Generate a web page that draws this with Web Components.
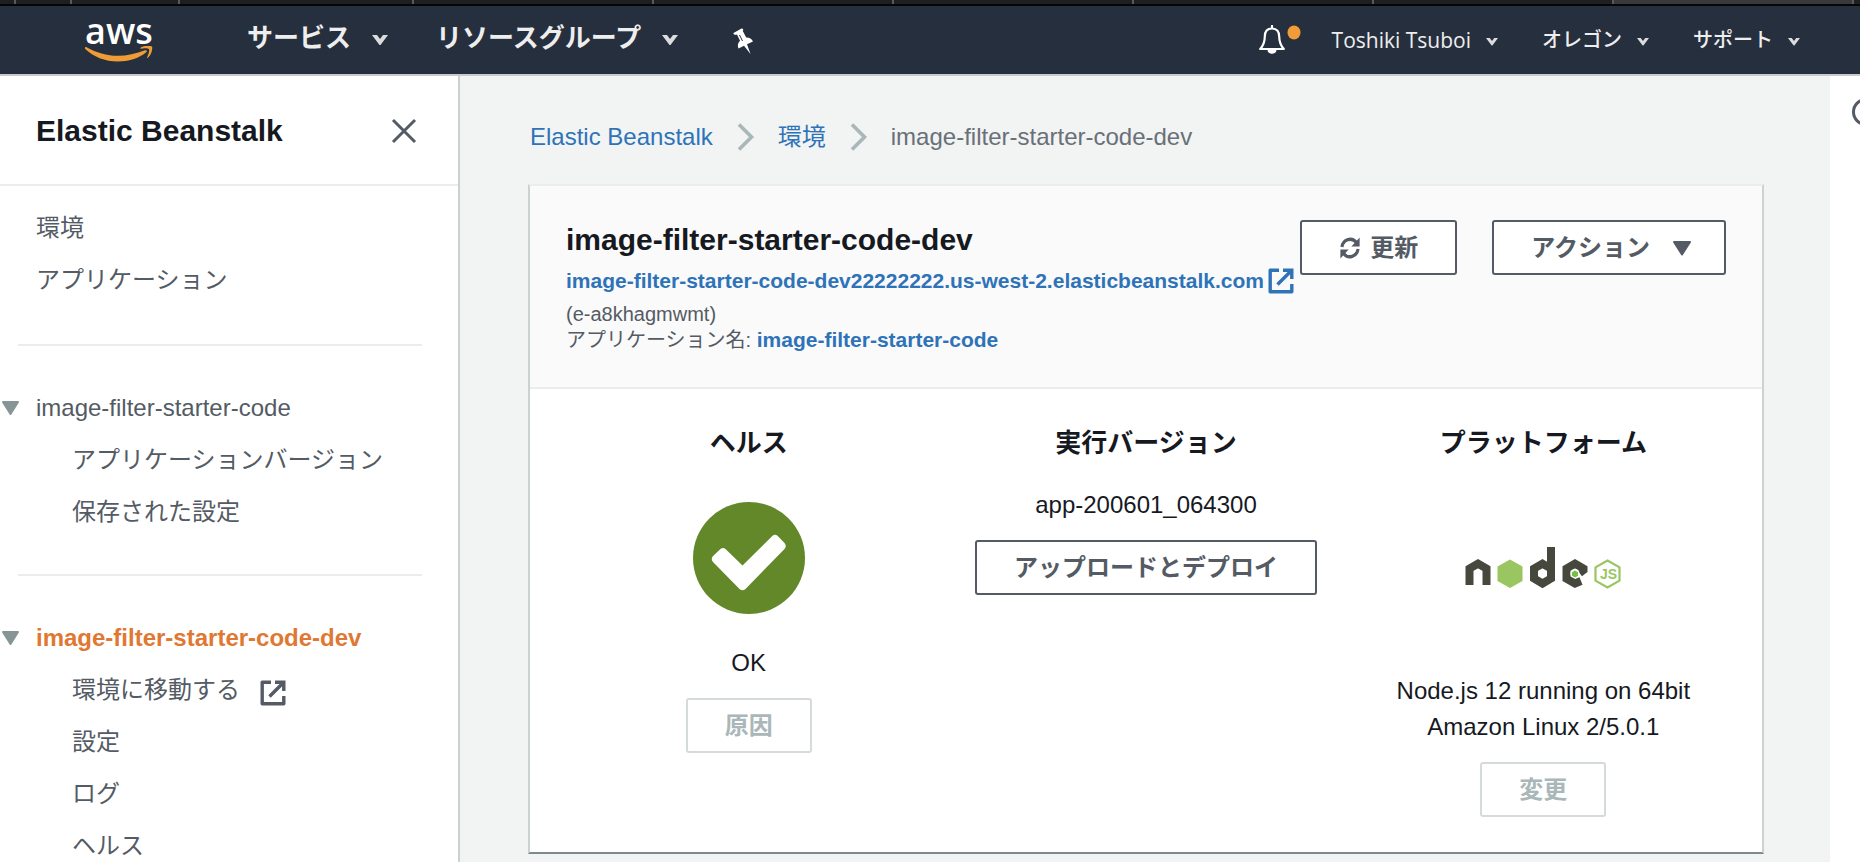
<!DOCTYPE html>
<html lang="ja">
<head>
<meta charset="utf-8">
<title>Elastic Beanstalk</title>
<style>
  html, body { height: 100%; }
  body {
    margin: 0;
    overflow: hidden;
    background: #f2f3f3;
    font-family: "Liberation Sans", "Noto Sans CJK JP", sans-serif;
    font-size: 24px;
    line-height: 36px;
    color: #16191f;
    --link: #2e73b8;
    --grey: #545b64;
    --line: #eaeded;
  }
</style>
</head>
<body>
<eb-console></eb-console>

<template id="t-console">
  <style>
    :host { display: flex; flex-direction: column; height: 100vh; }
    .row { display: flex; flex: 1; min-height: 0; }
    main { flex: 1; min-width: 0; padding: 43px 66px 0 68px; }
    eb-card { margin-top: 29px; }
  </style>
  <browser-tabs></browser-tabs>
  <eb-topbar></eb-topbar>
  <div class="row">
    <eb-sidebar></eb-sidebar>
    <main>
      <eb-breadcrumbs></eb-breadcrumbs>
      <eb-card></eb-card>
    </main>
    <eb-help></eb-help>
  </div>
</template>

<template id="t-tabs">
  <style>
    :host { display: flex; height: 4px; background: #1e201f; border-bottom: 2px solid #050606; }
    span { border-right: 2px solid #58595a; flex-basis: 0; }
    .on { background: #39393b; }
  </style>
  <span style="flex-grow:14"></span><span style="flex-grow:54"></span><span style="flex-grow:106"></span>
  <span style="flex-grow:232"></span><span style="flex-grow:238"></span><span style="flex-grow:238"></span>
  <span style="flex-grow:238"></span><span style="flex-grow:238"></span><span style="flex-grow:238"></span>
  <span class="on" style="flex-grow:238"></span><div style="flex:6 1 0"></div>
</template>

<template id="t-topbar">
  <style>
    :host { display: block; background: #262f3e; border-bottom: 2px solid #c8cacb; }
    header { display: flex; align-items: center; height: 68px; padding: 0 60px 0 84px; }
    .logo { display: flex; flex-direction: column; align-items: center; width: 70px; text-decoration: none; color: #fff;
      font: 600 36px/24px "Open Sans", sans-serif; margin-right: 93px; }
    .logo svg { margin-top: 3px; }
    nav { display: flex; align-items: center; }
    .primary { gap: 48px; padding-bottom: 4px; }
    .primary eb-menu { font-size: 26px; font-weight: 700; --gap: 21px; --caret: 16px; }
    .tools { margin-left: auto; gap: 44px; }
    .tools eb-menu { font-size: 20px; font-weight: 500; --gap: 15px; --caret: 12px; }
    .tools .user { font-family: "Open Sans", sans-serif; font-size: 21px; }
    button { all: unset; display: flex; }
    .pin { margin: 6px 0 0 6px; }
    .bell { margin-right: -14px; }
  </style>
  <header>
    <a class="logo" href="#">aws
      <svg width="70" height="16" viewBox="0 0 70 16"><path fill="#ef9b36" d="M1 1.5c.4-.8 1.2-.6 2-.1 9 5 20 8.400 31 8.400 9 0 18-2 27-5.500 1.500-.6 2.600.9 1.200 2C55 12.500 44 15.500 34 15.500 21 15.500 9 10.500 1.500 3.200 1 2.600.8 2 1 1.500zM65 3.200c-1.200-1.500-6-.9-8-.5-.8.1-.9-.6-.2-1.100 4-2.600 10.500-1.800 11.200-1 .8 1-.2 8-4 11.200-.6.5-1.200.2-.9-.4.900-2.100 2.800-6.800 1.900-8.200z"/></svg>
    </a>
    <nav class="primary">
      <eb-menu>サービス</eb-menu>
      <eb-menu>リソースグループ</eb-menu>
      <button class="pin" aria-label="ピン"><svg width="22" height="26" viewBox="0 0 22 26"><path fill="#fff" d="M1.500 5 9.500.6c1.500-.4 2.300 1.200 1.300 2.400l3.400 6.500c2.900-.2 5.600 1.300 6.800 4l-6 2.700L18.500 26l-6.500-8.300-5.500 2.800C5.200 17.800 5.800 14.600 8 12.700L5 6.600C3.200 7.200.9 6.500 1.500 5z"/><path d="m7.500 7 3 6" stroke="#262f3e" stroke-width="1"/></svg></button>
    </nav>
    <nav class="tools">
      <button class="bell" aria-label="通知"><svg width="44" height="30" viewBox="0 0 44 30"><path d="M14 3.500c-5 0-7.200 3.500-7.200 8 0 6-1.500 9-4.600 12.500h23.600c-3.100-3.500-4.600-6.500-4.600-12.500 0-4.500-2.200-8-7.200-8zM14 3.500V1" fill="none" stroke="#fff" stroke-width="2.200" stroke-linejoin="round" stroke-linecap="round"/><path d="M9.500 25h9c0 5-9 5-9 0z" fill="#fff"/><ellipse cx="36" cy="7.500" rx="6.500" ry="7" fill="#f29c38"/></svg></button>
      <eb-menu class="user">Toshiki Tsuboi</eb-menu>
      <eb-menu>オレゴン</eb-menu>
      <eb-menu>サポート</eb-menu>
    </nav>
  </header>
</template>

<template id="t-menu">
  <style>
    :host { display: block; color: #eee; }
    button { all: unset; display: flex; align-items: center; gap: var(--gap); white-space: nowrap; cursor: pointer; }
    svg { width: var(--caret); margin-top: 4px; }
  </style>
  <button><slot></slot><svg viewBox="0 0 16 10"><path fill="#dcdcdc" d="M0 0h5l3 4 3-4h5L8.500 10h-1z"/></svg></button>
</template>

<template id="t-sidebar">
  <style>
    :host { display: block; width: 458px; flex: none; background: #fff; border-right: 2px solid #ccd0d0; overflow: hidden; }
    header { display: flex; align-items: center; justify-content: space-between; height: 106px; padding: 2px 41px 0 36px; border-bottom: 2px solid var(--line); }
    h2 { margin: 0; font-size: 30px; }
    button { all: unset; display: flex; }
    hr { margin: 36px 36px 36px 18px; border: 0; border-top: 2px solid var(--line); }
    ul { list-style: none; margin: 0; padding: 0; }
    .first { padding: 16px 0 2px; }
  </style>
  <header>
    <h2>Elastic Beanstalk</h2>
    <button aria-label="閉じる"><svg width="26" height="26" viewBox="0 0 26 26"><path d="m2 2 22 22M24 2 2 24" stroke="#545b64" stroke-width="3"/></svg></button>
  </header>
  <nav>
    <ul class="first"><li><eb-link>環境</eb-link></li><li><eb-link>アプリケーション</eb-link></li></ul>
    <hr>
    <ul>
      <li><eb-link open>image-filter-starter-code</eb-link></li>
      <li><eb-link sub>アプリケーションバージョン</eb-link></li>
      <li><eb-link sub>保存された設定</eb-link></li>
    </ul>
    <hr>
    <ul>
      <li><eb-link open current>image-filter-starter-code-dev</eb-link></li>
      <li><eb-link sub>環境に移動する<eb-external slot="icon"></eb-external></eb-link></li>
      <li><eb-link sub>設定</eb-link></li>
      <li><eb-link sub>ログ</eb-link></li>
      <li><eb-link sub>ヘルス</eb-link></li>
    </ul>
  </nav>
</template>

<template id="t-link">
  <style>
    :host { display: flex; align-items: center; height: 52px; color: var(--grey); }
    .mark { width: 36px; display: flex; flex: none; }
    .mark svg { visibility: hidden; margin-left: 1px; }
    :host([open]) .mark svg { visibility: visible; }
    :host([sub]) .mark { width: 72px; }
    :host([current]) { color: #df7832; font-weight: 700; }
    a { display: flex; align-items: center; gap: 20px; color: inherit; text-decoration: none; white-space: nowrap; }
    ::slotted(eb-external) { margin-top: 6px; }
  </style>
  <span class="mark"><svg width="19" height="16" viewBox="0 0 19 16"><path d="M2 2h15L9.500 14z" fill="#879596" stroke="#879596" stroke-width="2" stroke-linejoin="round"/></svg></span>
  <a href="#"><slot></slot><slot name="icon"></slot></a>
</template>

<template id="t-external">
  <style>:host { display: block; width: 26px; height: 26px; } svg { display: block; }</style>
  <svg width="26" height="26" viewBox="0 0 26 26" fill="none" stroke="currentColor" stroke-width="3.400"><path d="M11 2.200H2.200v21.600h21.600V16" stroke-linejoin="round"/><path d="M15 2.200h8.800V11M23 3 9.500 16.500"/></svg>
</template>

<template id="t-breadcrumbs">
  <style>
    :host { display: block; }
    ol { display: flex; align-items: center; margin: 0; padding: 0 0 0 2px; gap: 23px; list-style: none; color: #687078; }
    li { display: flex; align-items: center; gap: 24px; }
    a { color: var(--link); text-decoration: none; }
  </style>
  <ol>
    <li><a href="#">Elastic Beanstalk</a><svg width="18" height="28" viewBox="0 0 18 28"><path d="m2 1.500 12.500 12.500L2 26.500" fill="none" stroke="#aab7b8" stroke-width="3.600"/></svg></li>
    <li><a href="#">環境</a><svg width="18" height="28" viewBox="0 0 18 28"><path d="m2 1.500 12.500 12.500L2 26.500" fill="none" stroke="#aab7b8" stroke-width="3.600"/></svg></li>
    <li>image-filter-starter-code-dev</li>
  </ol>
</template>

<template id="t-card">
  <style>
    :host { display: block; background: #fff; border: 2px solid #ccd2d2; border-top-color: var(--line); border-bottom-color: #7f8a8c; }
    header { display: flex; align-items: flex-start; background: #fafafa; border-bottom: 2px solid var(--line); padding: 34px 36px; }
    .info { flex: 1; min-width: 0; font-size: 20px; line-height: 26px; color: var(--grey); white-space: nowrap; }
    h1 { margin: 2px 0 10px; font-size: 30px; line-height: 36px; color: #16191f; }
    a { color: var(--link); font-size: 21px; font-weight: 700; text-decoration: none; }
    .url { display: flex; align-items: center; gap: 4px; margin-bottom: 7px; }
    .actions { display: flex; gap: 35px; }
    .stats { display: grid; grid-template-columns: repeat(3, 1fr); padding: 36px 20px 35px; text-align: center; }
    section { display: flex; flex-direction: column; align-items: center; }
    h3 { margin: 0; font-size: 26px; line-height: 36px; }
    p { margin: 0 0 17px; }
    .check { margin: 41px 0 31px; }
    .version { margin-top: 26px; }
    .node { margin: 83px 0; }
  </style>
  <header>
    <div class="info">
      <h1>image-filter-starter-code-dev</h1>
      <div class="url"><a href="#">image-filter-starter-code-dev22222222.us-west-2.elasticbeanstalk.com</a><a href="#" aria-label="新しいタブで開く"><eb-external></eb-external></a></div>
      <div>(e-a8khagmwmt)</div>
      <div>アプリケーション名: <a href="#">image-filter-starter-code</a></div>
    </div>
    <div class="actions">
      <eb-button><svg slot="before" width="22" height="24" viewBox="0 0 24 24" preserveAspectRatio="none" fill="none" stroke="currentColor" stroke-width="3.400"><path d="M3.200 11A9 9 0 0 1 19 6.500M20.800 13A9 9 0 0 1 5 17.500"/><path d="M22.500 1.500v9h-9zM1.500 22.500v-9h9z" fill="currentColor" stroke="none"/></svg>更新</eb-button>
      <eb-button wide>アクション<svg slot="after" width="20" height="16" viewBox="0 0 20 16"><path d="M2 2h16l-8 12.500z" fill="currentColor" stroke="currentColor" stroke-width="2" stroke-linejoin="round"/></svg></eb-button>
    </div>
  </header>
  <div class="stats">
    <section>
      <h3>ヘルス</h3>
      <svg class="check" width="112" height="112" viewBox="0 0 112 112"><circle cx="56" cy="56" r="56" fill="#62882a"/><path d="M27.500 47q2.500-2 5 0L49.500 63.500 79.500 33.800q2.500-2 5 0l7 7.200q2.500 3 0 6L52.500 87q-3 2.500-6 0L20 60q-2.500-3 0-6z" fill="#fff"/></svg>
      <p>OK</p>
      <eb-button disabled>原因</eb-button>
    </section>
    <section>
      <h3>実行バージョン</h3>
      <p class="version">app-200601_064300</p>
      <eb-button>アップロードとデプロイ</eb-button>
    </section>
    <section>
      <h3>プラットフォーム</h3>
      <svg class="node" width="156" height="46" viewBox="0 0 156 46" role="img" aria-label="node js">
        <g fill="none" stroke="#46483e" stroke-width="8">
          <path d="M4.500 41V24.500l8.500-4.800 8.500 4.800V41"/>
          <path d="m77.500 19.700 8.500 4.800v10l-8.500 5-8.500-5v-10zM86 3v31"/>
          <path d="m116 37-6 2.500-8.500-4.900V24.600l8.500-4.900 8.500 4.900v1.400l-4 3.200"/>
        </g>
        <circle cx="110" cy="29.500" r="4.500" fill="#fff"/>
        <path d="m110 26.500 3 1.700v3.500l-3 1.800-3-1.800v-3.500z" fill="#77c044"/>
        <path d="m45 15.500 12.500 7V37L45 44 32.500 37V22.500z" fill="#99c661"/>
        <path d="m142.500 16.500 12 6.800v13.400l-12 6.800-12-6.800V23.300z" fill="none" stroke="#99c661" stroke-width="2.200"/>
        <text x="135" y="35" font-family="Liberation Sans" font-weight="700" font-size="14" fill="#99c661">JS</text>
      </svg>
      <p>Node.js 12 running on 64bit<br>Amazon Linux 2/5.0.1</p>
      <eb-button disabled>変更</eb-button>
    </section>
  </div>
</template>

<template id="t-button">
  <style>
    :host { display: block; }
    button { display: flex; align-items: center; gap: 9px; height: 55px; box-sizing: border-box; padding: 0 37px; margin: 0;
      border: 2px solid var(--grey); border-radius: 3px; background: #fff; color: var(--grey); font: inherit; font-weight: 700; white-space: nowrap; }
    :host([wide]) button { gap: 22px; padding: 0 32px 0 37px; }
    button:disabled { color: #aab7b8; border-color: #d5dbdb; }
  </style>
  <button><slot name="before"></slot><slot></slot><slot name="after"></slot></button>
</template>

<template id="t-help">
  <style>
    :host { display: block; width: 30px; flex: none; background: #fff; overflow: hidden; }
    button { all: unset; display: block; margin: 22px 0 0 22px; width: 28px; }
    svg { display: block; }
  </style>
  <button aria-label="情報"><svg width="28" height="28" viewBox="0 0 28 28"><circle cx="14" cy="14" r="12.500" fill="none" stroke="#545b64" stroke-width="3"/></svg></button>
</template>

<script>
  class TemplateElement extends HTMLElement {
    constructor() {
      super();
      const template = document.getElementById(this.constructor.template);
      this.attachShadow({ mode: "open" }).append(template.content.cloneNode(true));
    }
  }
  const define = (name, template) =>
    customElements.define(name, class extends TemplateElement { static template = template; });

  customElements.define("eb-button", class extends TemplateElement {
    static template = "t-button";
    connectedCallback() {
      this.shadowRoot.querySelector("button").disabled = this.hasAttribute("disabled");
    }
  });
  define("eb-external", "t-external");
  define("eb-menu", "t-menu");
  define("eb-link", "t-link");
  define("browser-tabs", "t-tabs");
  define("eb-topbar", "t-topbar");
  define("eb-sidebar", "t-sidebar");
  define("eb-breadcrumbs", "t-breadcrumbs");
  define("eb-card", "t-card");
  define("eb-help", "t-help");
  define("eb-console", "t-console");
</script>
</body>
</html>
